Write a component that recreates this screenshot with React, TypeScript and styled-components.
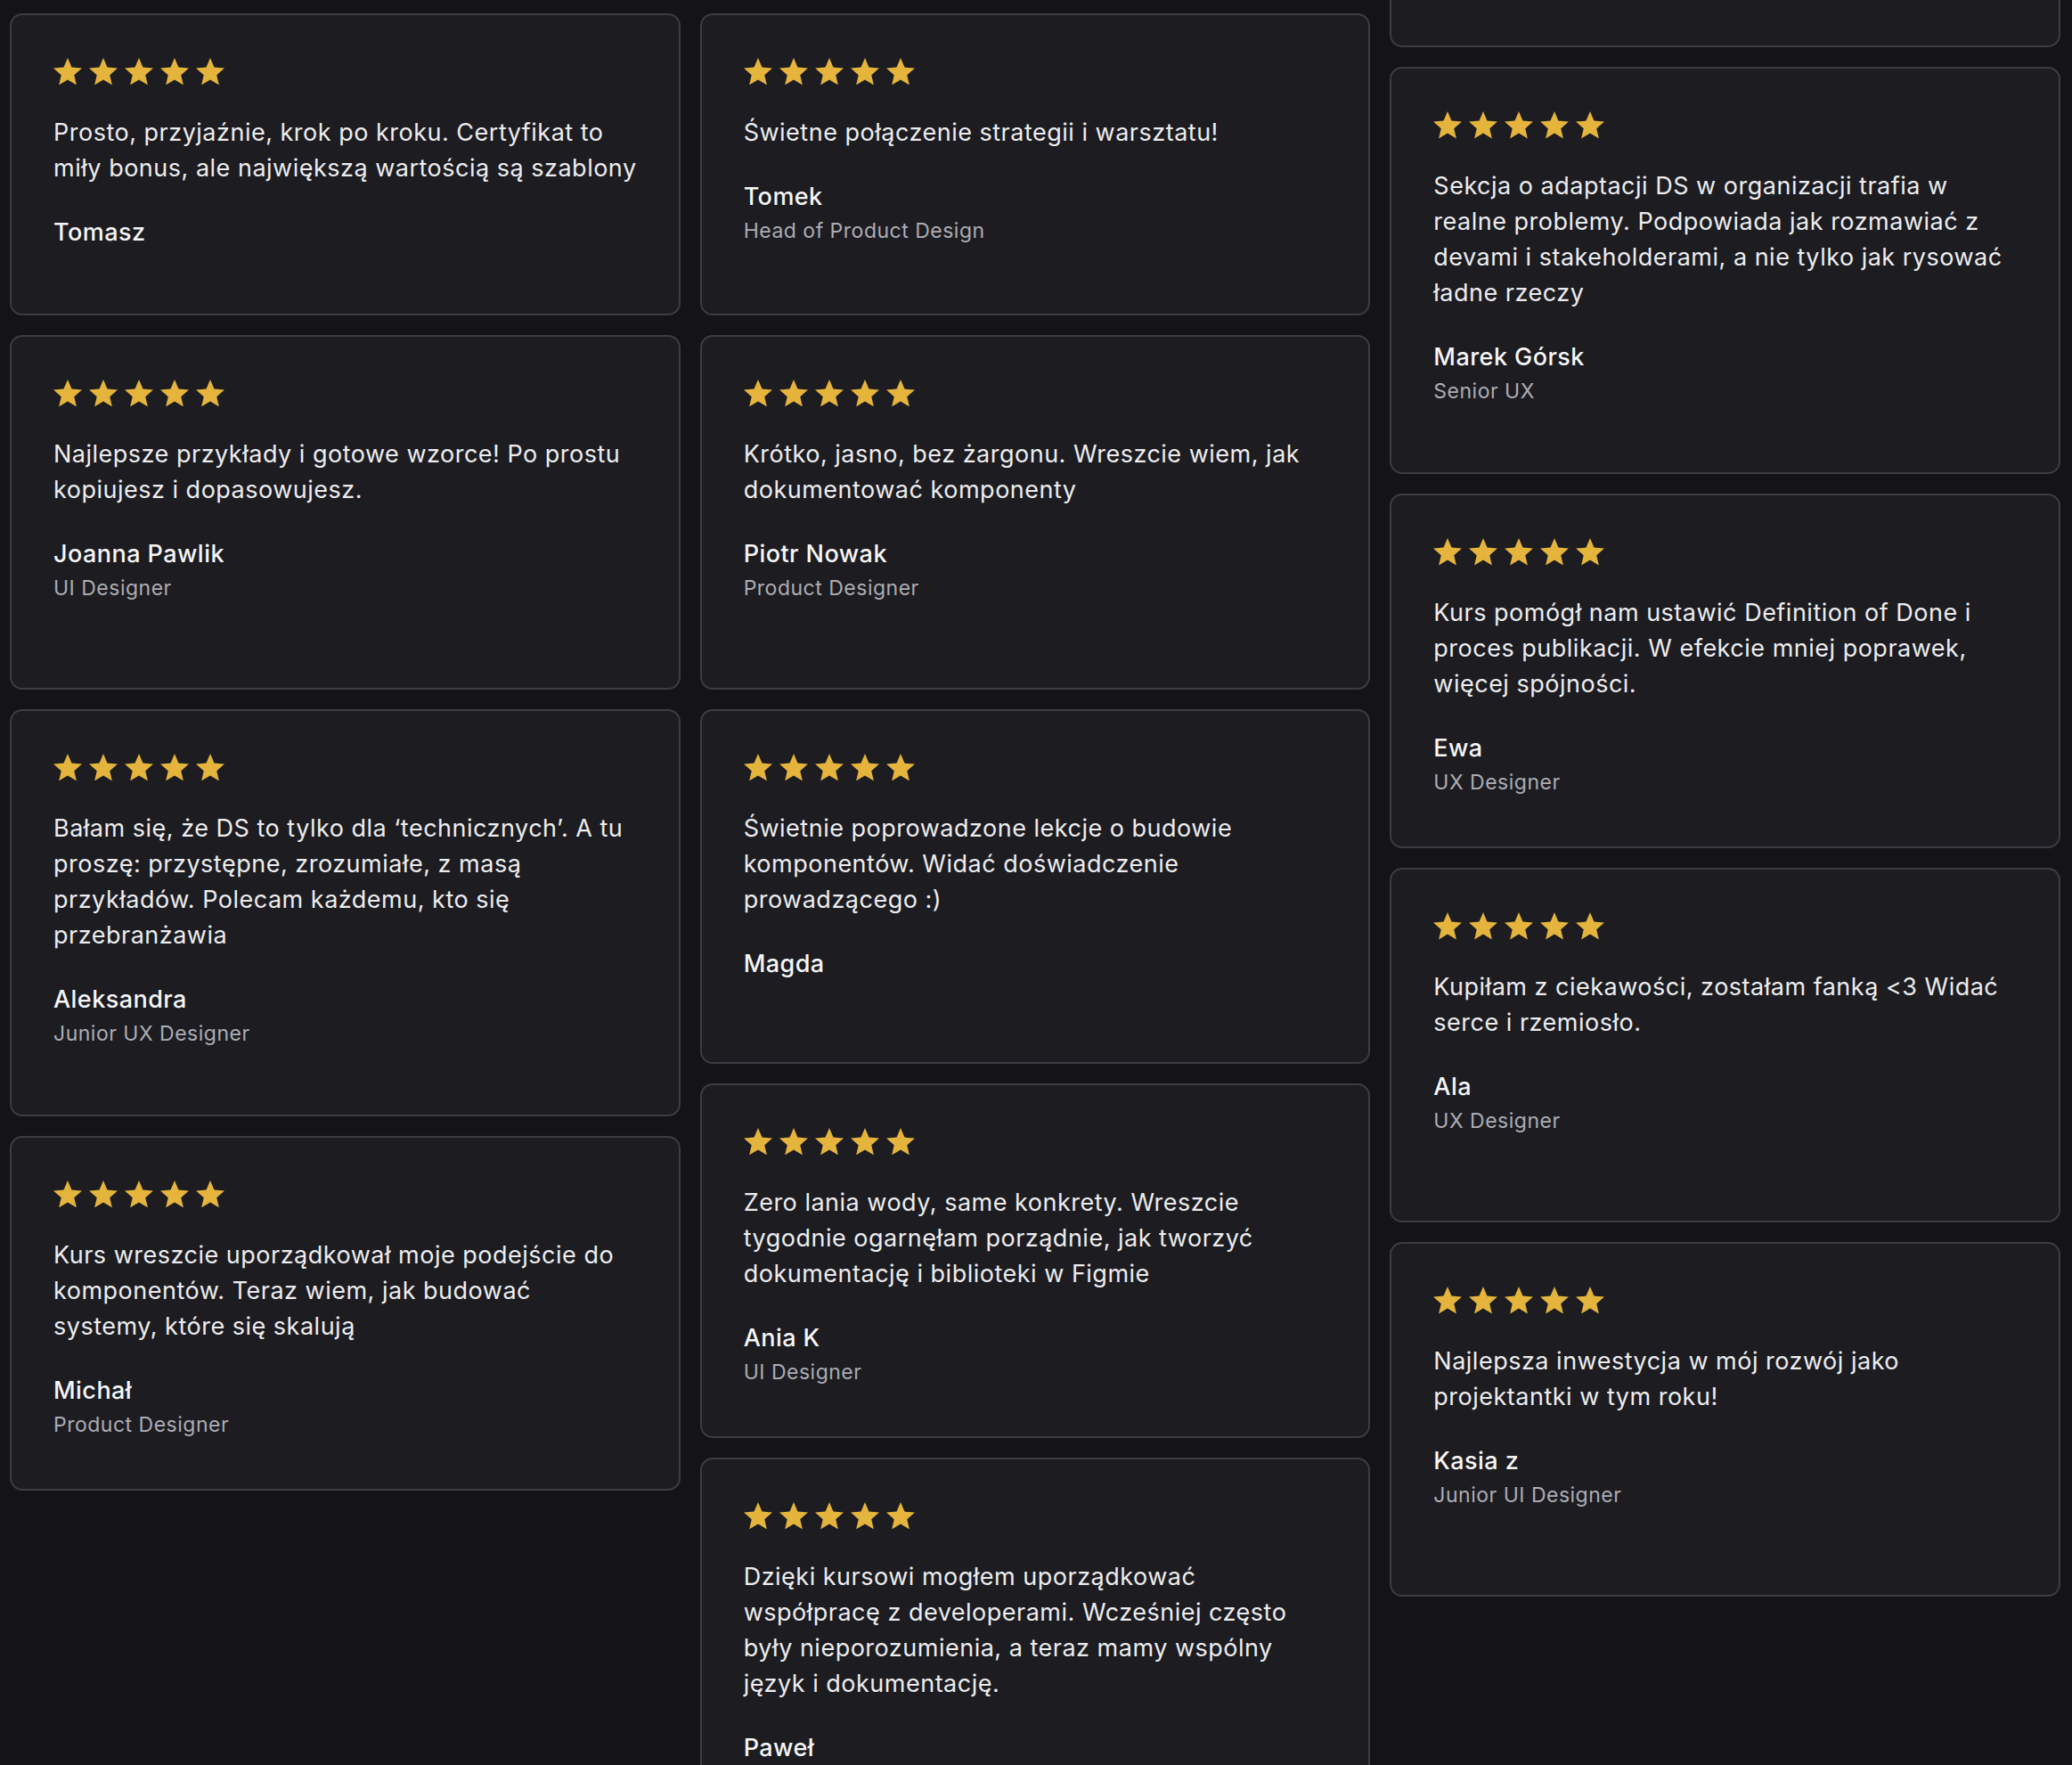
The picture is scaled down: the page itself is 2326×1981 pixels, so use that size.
import React from "react";
import styled, { createGlobalStyle } from "styled-components";

const GlobalStyle = createGlobalStyle`
  html, body {
    margin: 0;
    padding: 0;
    background: #141417;
    overflow: hidden;
  }
  #root {
    height: 100vh;
    overflow: hidden;
  }
  * { box-sizing: border-box; }
`;

type Size = "sm" | "md" | "lg";

interface Review {
  text: string;
  name: string;
  role?: string;
  size: Size;
}

const heights: Record<Size, number> = { sm: 339, md: 398, lg: 457 };

const columns: { offset: number; items: Review[] }[] = [
  {
    offset: 0,
    items: [
      {
        text: "Prosto, przyjaźnie, krok po kroku. Certyfikat to\nmiły bonus, ale największą wartością są szablony",
        name: "Tomasz",
        size: "sm",
      },
      {
        text: "Najlepsze przykłady i gotowe wzorce! Po prostu\nkopiujesz i dopasowujesz.",
        name: "Joanna Pawlik",
        role: "UI Designer",
        size: "md",
      },
      {
        text: "Bałam się, że DS to tylko dla ‘technicznych’. A tu\nproszę: przystępne, zrozumiałe, z masą\nprzykładów. Polecam każdemu, kto się\nprzebranżawia",
        name: "Aleksandra",
        role: "Junior UX Designer",
        size: "lg",
      },
      {
        text: "Kurs wreszcie uporządkował moje podejście do\nkomponentów. Teraz wiem, jak budować\nsystemy, które się skalują",
        name: "Michał",
        role: "Product Designer",
        size: "md",
      },
    ],
  },
  {
    offset: 0,
    items: [
      {
        text: "Świetne połączenie strategii i warsztatu!",
        name: "Tomek",
        role: "Head of Product Design",
        size: "sm",
      },
      {
        text: "Krótko, jasno, bez żargonu. Wreszcie wiem, jak\ndokumentować komponenty",
        name: "Piotr Nowak",
        role: "Product Designer",
        size: "md",
      },
      {
        text: "Świetnie poprowadzone lekcje o budowie\nkomponentów. Widać doświadczenie\nprowadzącego :)",
        name: "Magda",
        size: "md",
      },
      {
        text: "Zero lania wody, same konkrety. Wreszcie\ntygodnie ogarnęłam porządnie, jak tworzyć\ndokumentację i biblioteki w Figmie",
        name: "Ania K",
        role: "UI Designer",
        size: "md",
      },
      {
        text: "Dzięki kursowi mogłem uporządkować\nwspółpracę z developerami. Wcześniej często\nbyły nieporozumienia, a teraz mamy wspólny\njęzyk i dokumentację.",
        name: "Paweł",
        role: "Frontend Developer",
        size: "lg",
      },
    ],
  },
  {
    offset: -359.7,
    items: [
      {
        text: "Konkretna wiedza podana w przystępny sposób.\nWszystko od razu do wdrożenia w projekcie.",
        name: "Karolina",
        role: "Product Designer",
        size: "md",
      },
      {
        text: "Sekcja o adaptacji DS w organizacji trafia w\nrealne problemy. Podpowiada jak rozmawiać z\ndevami i stakeholderami, a nie tylko jak rysować\nładne rzeczy",
        name: "Marek Górsk",
        role: "Senior UX",
        size: "lg",
      },
      {
        text: "Kurs pomógł nam ustawić Definition of Done i\nproces publikacji. W efekcie mniej poprawek,\nwięcej spójności.",
        name: "Ewa",
        role: "UX Designer",
        size: "md",
      },
      {
        text: "Kupiłam z ciekawości, zostałam fanką <3 Widać\nserce i rzemiosło.",
        name: "Ala",
        role: "UX Designer",
        size: "md",
      },
      {
        text: "Najlepsza inwestycja w mój rozwój jako\nprojektantki w tym roku!",
        name: "Kasia z",
        role: "Junior UI Designer",
        size: "md",
      },
    ],
  },
];

const Wall = styled.main`
  display: grid;
  grid-template-columns: repeat(3, minmax(0, 1fr));
  column-gap: 22px;
  padding: 15px 13px 0 11px;
  align-items: start;
  font-family: Inter, "Noto Sans", "Liberation Sans", sans-serif;
`;

const Column = styled.section<{ $offset: number }>`
  display: flex;
  flex-direction: column;
  gap: 22px;
  margin-top: ${(p) => p.$offset}px;
`;

const Card = styled.article<{ $size: Size }>`
  display: flex;
  flex-direction: column;
  height: ${(p) => heights[p.$size]}px;
  padding: 48px 36px 0 47px;
  background: #1c1c21;
  border: 2px solid #3c3c42;
  border-radius: 14px;
  flex-shrink: 0;
`;

const Stars = styled.div`
  display: flex;
  gap: 8px;
  height: 30px;
`;

const StarIcon = styled.svg`
  width: 32px;
  height: 30.4px;
  display: block;
  fill: #e4b43c;
`;

const Quote = styled.p`
  margin: 34px 0 0;
  font-size: 27px;
  line-height: 40px;
  font-weight: 400;
  letter-spacing: 0.5px;
  color: #ececee;
  white-space: pre-line;
`;

const Name = styled.div`
  margin-top: 32px;
  font-size: 27px;
  line-height: 40px;
  font-weight: 500;
  letter-spacing: 0.45px;
  color: #f5f5f6;
`;

const Role = styled.div`
  margin-top: 1px;
  font-size: 23px;
  line-height: 34px;
  font-weight: 400;
  letter-spacing: 0.5px;
  color: #adadb3;
`;

const Star = () => (
  <StarIcon viewBox="2 2 20 19" aria-hidden="true">
    <path d="M12 17.27 18.18 21l-1.64-7.03L22 9.24l-7.19-.61L12 2 9.19 8.63 2 9.24l5.46 4.73L5.82 21z" />
  </StarIcon>
);

const ReviewCard = ({ review }: { review: Review }) => (
  <Card $size={review.size}>
    <Stars>
      {[0, 1, 2, 3, 4].map((i) => (
        <Star key={i} />
      ))}
    </Stars>
    <Quote>{review.text}</Quote>
    <Name>{review.name}</Name>
    {review.role && <Role>{review.role}</Role>}
  </Card>
);

export default function App() {
  return (
    <>
      <GlobalStyle />
      <Wall>
        {columns.map((col, ci) => (
          <Column key={ci} $offset={col.offset}>
            {col.items.map((r, ri) => (
              <ReviewCard key={ri} review={r} />
            ))}
          </Column>
        ))}
      </Wall>
    </>
  );
}
